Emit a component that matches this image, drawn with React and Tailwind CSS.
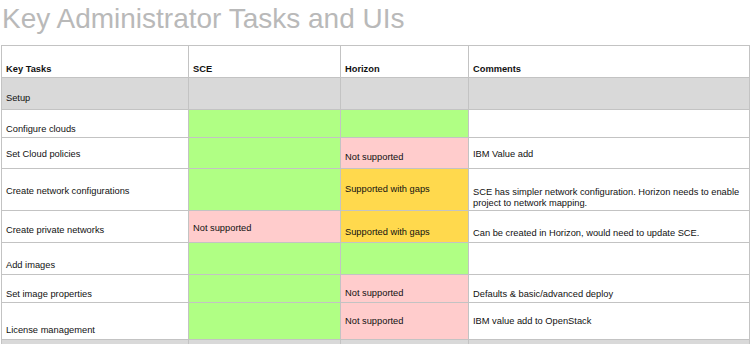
import React from "react";

const G = "bg-[#b0ff84]";
const P = "bg-[#ffcccc]";
const Y = "bg-[#ffd94d]";
const W = "bg-white";
const S = "bg-[#d9d9d9]";

function Cell({ bg, pt, bold, children }) {
  return (
    <div className={`${bg} ${pt} pl-[4px] pr-[2px] ${bold ? "font-bold" : ""} overflow-hidden whitespace-nowrap`}>
      {children}
    </div>
  );
}

export default function App() {
  return (
    <div className="w-[754px] h-[344px] bg-white overflow-hidden font-['Liberation_Sans',Arial,sans-serif]">
      <div className="h-[45px] pt-[2px] pl-[2px] text-[28px] leading-[34px] text-[#b9b9b9]">
        Key Administrator Tasks and UIs
      </div>
      <div className="ml-[1px] w-[749px] bg-[#c3c3c3] p-px pb-0 grid grid-cols-[186px_151px_127px_280px] grid-rows-[31px_31px_27px_30px_41px_31px_31px_27px_36px_10px] gap-px text-[9.3px] leading-[11px] text-[#111]">
        <Cell bg={W} pt="pt-[18px]" bold>Key Tasks</Cell>
        <Cell bg={W} pt="pt-[18px]" bold>SCE</Cell>
        <Cell bg={W} pt="pt-[18px]" bold>Horizon</Cell>
        <Cell bg={W} pt="pt-[18px]" bold>Comments</Cell>

        <Cell bg={S} pt="pt-[15px]">Setup</Cell>
        <Cell bg={S} pt="pt-[15px]"></Cell>
        <Cell bg={S} pt="pt-[15px]"></Cell>
        <Cell bg={S} pt="pt-[15px]"></Cell>

        <Cell bg={W} pt="pt-[14px]">Configure clouds</Cell>
        <Cell bg={G} pt="pt-[14px]"></Cell>
        <Cell bg={G} pt="pt-[14px]"></Cell>
        <Cell bg={W} pt="pt-[14px]"></Cell>

        <Cell bg={W} pt="pt-[11px]">Set Cloud policies</Cell>
        <Cell bg={G} pt="pt-[11px]"></Cell>
        <Cell bg={P} pt="pt-[14px]">Not supported</Cell>
        <Cell bg={W} pt="pt-[11px]">IBM Value add</Cell>

        <Cell bg={W} pt="pt-[17px]">Create network configurations</Cell>
        <Cell bg={G} pt="pt-[17px]"></Cell>
        <Cell bg={Y} pt="pt-[15px]">Supported with gaps</Cell>
        <Cell bg={W} pt="pt-[18px]">
          SCE has simpler network configuration. Horizon needs to enable
          <br />
          project to network mapping.
        </Cell>

        <Cell bg={W} pt="pt-[14px]">Create private networks</Cell>
        <Cell bg={P} pt="pt-[12px]">Not supported</Cell>
        <Cell bg={Y} pt="pt-[16px]">Supported with gaps</Cell>
        <Cell bg={W} pt="pt-[17px]">Can be created in Horizon, would need to update SCE.</Cell>

        <Cell bg={W} pt="pt-[17px]">Add images</Cell>
        <Cell bg={G} pt="pt-[17px]"></Cell>
        <Cell bg={G} pt="pt-[17px]"></Cell>
        <Cell bg={W} pt="pt-[17px]"></Cell>

        <Cell bg={W} pt="pt-[14px]">Set image properties</Cell>
        <Cell bg={G} pt="pt-[14px]"></Cell>
        <Cell bg={P} pt="pt-[13px]">Not supported</Cell>
        <Cell bg={W} pt="pt-[14px]">Defaults &amp; basic/advanced deploy</Cell>

        <Cell bg={W} pt="pt-[22px]">License management</Cell>
        <Cell bg={G} pt="pt-[22px]"></Cell>
        <Cell bg={P} pt="pt-[13px]">Not supported</Cell>
        <Cell bg={W} pt="pt-[13px]">IBM value add to OpenStack</Cell>

        <Cell bg={S} pt="pt-[2px]"></Cell>
        <Cell bg={S} pt="pt-[2px]"></Cell>
        <Cell bg={S} pt="pt-[2px]"></Cell>
        <Cell bg={S} pt="pt-[2px]"></Cell>
      </div>
    </div>
  );
}
